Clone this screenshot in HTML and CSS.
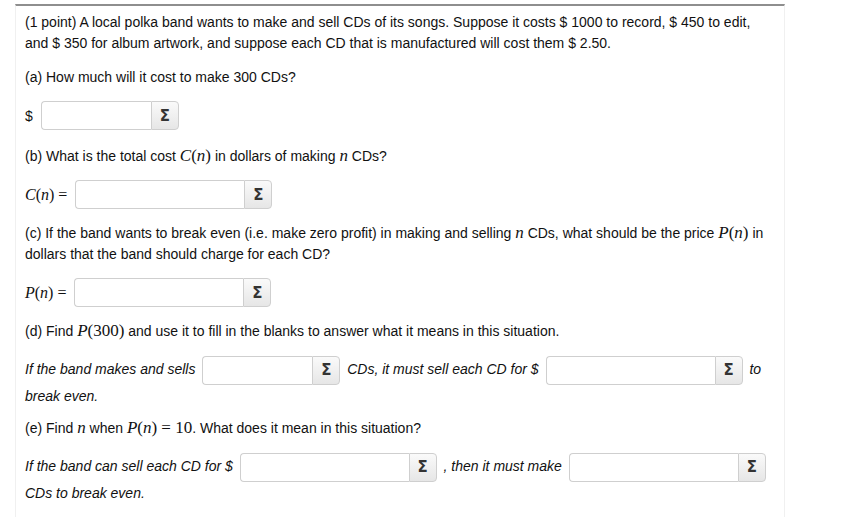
FILE: index.html
```html
<!DOCTYPE html>
<html>
<head>
<meta charset="utf-8">
<link rel="stylesheet" href="styles.css">
</head>
<body>
<div class="problem">
  <p class="intro">(1 point) A local polka band wants to make and sell CDs of its songs. Suppose it costs $ 1000 to record, $ 450 to edit, and $ 350 for album artwork, and suppose each CD that is manufactured will cost them $ 2.50.</p>

  <p>(a) How much will it cost to make 300 CDs?</p>
  <div class="row first"><span class="label">$</span><span class="ans short"><span class="field"></span><span class="sigma">Σ</span></span></div>

  <p>(b) What is the total cost <span class="math"><i>C</i>(<i>n</i>)</span> in dollars of making <span class="math"><i>n</i></span> CDs?</p>
  <div class="row"><span class="math big"><i>C</i>(<i>n</i>) =</span><span class="ans long"><span class="field"></span><span class="sigma">Σ</span></span></div>

  <p>(c) If the band wants to break even (i.e. make zero profit) in making and selling <span class="math"><i>n</i></span> CDs, what should be the price <span class="math"><i>P</i>(<i>n</i>)</span> in dollars that the band should charge for each CD?</p>
  <div class="row"><span class="math big"><i>P</i>(<i>n</i>) =</span><span class="ans long"><span class="field"></span><span class="sigma">Σ</span></span></div>

  <p class="lead">(d) Find <span class="math"><i>P</i>(300)</span> and use it to fill in the blanks to answer what it means in this situation.</p>
  <p class="fill"><em>If the band makes and sells</em> <span class="ans short"><span class="field"></span><span class="sigma">Σ</span></span> <em>CDs, it must sell each CD for $</em> <span class="ans long"><span class="field"></span><span class="sigma">Σ</span></span> <em>to break even.</em></p>

  <p class="lead">(e) Find <span class="math"><i>n</i></span> when <span class="math"><i>P</i>(<i>n</i>) = 10</span>. What does it mean in this situation?</p>
  <p class="fill"><em>If the band can sell each CD for $</em> <span class="ans long"><span class="field"></span><span class="sigma">Σ</span></span> <em>, then it must make</em> <span class="ans long"><span class="field"></span><span class="sigma">Σ</span></span> <em>CDs to break even.</em></p>
</div>
</body>
</html>
```

FILE: styles.css
```css
html, body {
  margin: 0;
  padding: 0;
  background: #fff;
}

body {
  font-family: "Liberation Sans", Arial, Helvetica, sans-serif;
  font-size: 14px;
  color: #111;
}

.problem {
  margin: 4px 0 0 15px;
  width: 750px;
  padding: 6px 9px 14px 9px;
  border-top: 2px solid #8e8e8e;
  border-left: 1px solid #f0f0f0;
  border-right: 1px solid #f0f0f0;
}

p {
  margin: 0 0 13px 0;
  line-height: 21px;
}

.row {
  display: flex;
  align-items: center;
  gap: 8px;
  margin: 0 0 14px 0;
}

.row.first {
  margin-bottom: 16px;
}

.math {
  font-family: "Liberation Serif", "Times New Roman", serif;
  font-size: 17px;
  line-height: 1;
}

.math i {
  font-style: italic;
}

.math.big {
  font-size: 16px;
}

.ans {
  display: inline-flex;
  height: 29px;
  vertical-align: middle;
  margin: 1px 3px;
}

.row .ans {
  margin: 0;
}

.field {
  display: block;
  border: 1px solid #cfcfcf;
  border-right: none;
  border-radius: 4px 0 0 4px;
  background: #fff;
  box-sizing: border-box;
  height: 29px;
}

.short .field {
  width: 110px;
}

.long .field {
  width: 169px;
}

.sigma {
  display: flex;
  align-items: center;
  justify-content: center;
  width: 28px;
  height: 29px;
  box-sizing: border-box;
  border: 1px solid #cfcfcf;
  border-radius: 0 4px 4px 0;
  background: linear-gradient(#fafafa, #e6e6e6);
  font-family: "DejaVu Sans", sans-serif;
  font-weight: bold;
  font-size: 15px;
  color: #333;
}

.lead {
  margin-bottom: 13px;
}

.fill {
  margin-bottom: 11px;
}

.fill em {
  font-style: italic;
}
```
